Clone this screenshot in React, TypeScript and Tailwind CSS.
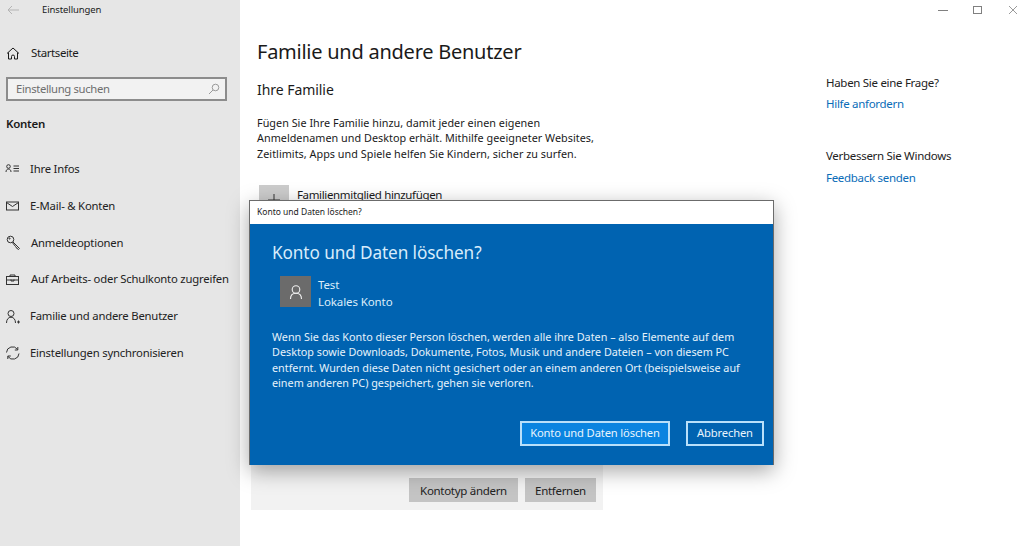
import type { ReactNode } from "react";

const font = "font-['Noto_Sans','Open_Sans',sans-serif]";

function Icon({ children, className = "" }: { children: ReactNode; className?: string }) {
  return (
    <svg width="16" height="16" viewBox="0 0 16 16" fill="none" stroke="currentColor" strokeWidth="1" className={className} aria-hidden="true">
      {children}
    </svg>
  );
}

const navItems: { label: string; left: string; icon: ReactNode }[] = [
  {
    label: "Ihre Infos",
    left: "ml-[5px]",
    icon: (
      <>
        <circle cx="3.5" cy="5.5" r="1.8" />
        <path d="M1 11c0-1.900 1-2.900 2.500-2.900S6 9.100 6 11M8.500 5h5.500M8.500 7.500h5.500M8.500 10h5.500" />
      </>
    ),
  },
  {
    label: "E-Mail- & Konten",
    left: "ml-[5px]",
    icon: (
      <>
        <rect x="1.500" y="4" width="12" height="8" />
        <path d="M1.500 4.500l6 4 6-4" />
      </>
    ),
  },
  {
    label: "Anmeldeoptionen",
    left: "ml-[6px]",
    icon: (
      <>
        <circle cx="4.500" cy="4.500" r="3.300" />
        <path d="M7 7l6.500 6.500-1 1-1-.5-.5-1-1-.5-.5-1L6.300 7.500" />
        <circle cx="3.500" cy="3.500" r="0.600" />
      </>
    ),
  },
  {
    label: "Auf Arbeits- oder Schulkonto zugreifen",
    left: "ml-[6px]",
    icon: (
      <>
        <rect x="0.500" y="4.500" width="12" height="8" />
        <path d="M4 4.500V3h5v1.500M0.500 8h12M5 7.500v1.500h3V7.500" />
      </>
    ),
  },
  {
    label: "Familie und andere Benutzer",
    left: "ml-[5px]",
    icon: (
      <>
        <circle cx="6" cy="4.500" r="3" />
        <path d="M1.500 14c0-3.500 1.800-5.800 4.500-5.800s4.500 2.300 4.500 5.800M12 13h3M13.500 11.500v3" />
      </>
    ),
  },
  {
    label: "Einstellungen synchronisieren",
    left: "ml-[5px]",
    icon: (
      <>
        <path d="M1.500 7.500A6 6 0 0 1 12.500 4.500M14 8.500A6 6 0 0 1 3 11.500" />
        <path d="M12.800 2v3h-3M2.800 14v-3h3" />
      </>
    ),
  },
];

function Sidebar() {
  return (
    <aside className="w-[240px] h-[546px] shrink-0 bg-[#e6e6e6] flex flex-col text-[#1a1a1a]">
      <div className="h-[19px] flex items-center pt-px">
        <svg width="12" height="10" viewBox="0 0 12 10" fill="none" stroke="#b4b4b4" strokeWidth="1" className="ml-[7px]" aria-hidden="true">
          <path d="M12 5H1M5 1L1 5l4 4" />
        </svg>
        <span className="ml-[23px] text-[9.500px] tracking-[-0.1px]">Einstellungen</span>
      </div>
      <div className="mt-[25px] h-[18px] flex items-center">
        <Icon className="ml-[5px]">
          <path d="M2 8.500L8 3l6 5.500M3.500 7.500V14h3v-2.500a1.500 1.500 0 0 1 3 0V14h3V7.500" />
        </Icon>
        <span className="ml-[10px] text-[11.500px] tracking-[-0.4px]">Startseite</span>
      </div>
      <div className="mt-[15px] mx-[6px] w-[221px] h-[24px] box-border border-2 border-[#8c8c8c] bg-[#f2f2f2] flex items-center justify-between pl-2 pr-[5px]">
        <span className="text-[11.300px] text-[#6e6e6e] tracking-[-0.35px]">Einstellung suchen</span>
        <svg width="12" height="12" viewBox="0 0 12 12" fill="none" stroke="#9a9a9a" strokeWidth="1" aria-hidden="true">
          <circle cx="7.500" cy="4.500" r="3.300" />
          <path d="M5 7L1 11" />
        </svg>
      </div>
      <div className="mt-[14px] ml-[6px] h-[18px] flex items-center text-[11.500px] font-semibold tracking-[-0.25px]">Konten</div>
      <nav className="mt-[18px] flex flex-col">
        {navItems.map((item) => (
          <div key={item.label} className="h-[36.800px] flex items-center text-[#222]">
            <span className={`${item.left} w-[16px] flex`}>
              <Icon className="text-[#333]">{item.icon}</Icon>
            </span>
            <span className="ml-[9px] text-[11.300px] tracking-[-0.2px] whitespace-nowrap">{item.label}</span>
          </div>
        ))}
      </nav>
    </aside>
  );
}

function WindowControls() {
  return (
    <div className="h-[19px] flex justify-end items-center gap-[25px] pr-[2px] pt-px text-[#808080]">
      <svg width="10" height="10" viewBox="0 0 10 10" stroke="currentColor" aria-hidden="true"><path d="M0 5.500h10" /></svg>
      <svg width="10" height="10" viewBox="0 0 10 10" fill="none" stroke="currentColor" aria-hidden="true"><rect x="0.500" y="1.500" width="8" height="7" /></svg>
      <svg width="10" height="10" viewBox="0 0 10 10" stroke="currentColor" strokeWidth="0.800" aria-hidden="true"><path d="M1 1l8 8M9 1l-8 8" /></svg>
    </div>
  );
}

function Dialog() {
  return (
    <div className="absolute left-[249px] top-[200px] w-[525px] shadow-[0_6px_20px_rgba(0,0,0,0.35)] border border-[#6b6b6b] border-b-0">
      <div className="h-[23px] bg-white flex items-center pl-[7px] text-[8.500px] text-[#222]">Konto und Daten löschen?</div>
      <div className="h-[241px] bg-[#0063b1] text-white flex flex-col pl-[22px] pr-[9px]">
        <h2 className="mt-[16px] text-[17.200px] leading-[26px] font-normal text-[#d8ecfb] tracking-[-0.1px]">Konto und Daten löschen?</h2>
        <div className="mt-[10px] ml-[8px] flex gap-[7px]">
          <div className="w-[31px] h-[31px] bg-[#6b6b6b] flex items-center justify-center">
            <svg width="16" height="16" viewBox="0 0 16 16" fill="none" stroke="#f0f0f0" strokeWidth="1.100" aria-hidden="true">
              <circle cx="8" cy="5.500" r="3.800" />
              <path d="M2.500 15c0-3.800 2.500-5.800 5.500-5.800s5.500 2 5.500 5.800" />
            </svg>
          </div>
          <div className="text-[11.500px] leading-[17px] text-[#dcedfa] tracking-[-0.1px]">
            <div>Test</div>
            <div>Lokales Konto</div>
          </div>
        </div>
        <p className="mt-[19px] text-[10.800px] leading-[15.400px] text-[#e6f2fb] whitespace-nowrap">
          Wenn Sie das Konto dieser Person löschen, werden alle ihre Daten – also Elemente auf dem
          <br />
          Desktop sowie Downloads, Dokumente, Fotos, Musik und andere Dateien – von diesem PC
          <br />
          entfernt. Wurden diese Daten nicht gesichert oder an einem anderen Ort (beispielsweise auf
          <br />
          einem anderen PC) gespeichert, gehen sie verloren.
        </p>
        <div className="mt-[30px] flex justify-end gap-[16px]">
          <button type="button" className="w-[150px] h-[25px] border-2 border-[#b9e0fa] bg-[#0a84e0] text-[11.200px] tracking-[-0.15px] text-[#e8f4fd]">
            Konto und Daten löschen
          </button>
          <button type="button" className="w-[78px] h-[25px] border-2 border-[#b9e0fa] bg-[#0063b1] text-[11.200px] tracking-[-0.15px] text-[#e8f4fd]">
            Abbrechen
          </button>
        </div>
      </div>
    </div>
  );
}

export default function App() {
  return (
    <div className={`${font} relative w-[1020px] h-[546px] overflow-hidden bg-white flex`}>
      <Sidebar />
      <main className="flex-1 flex flex-col min-w-0">
        <WindowControls />
        <div className="flex">
          <section className="w-[586px] pl-[17px] shrink-0 text-[#1a1a1a]">
            <h1 className="mt-[18px] h-[30px] text-[20px] leading-[30px] font-normal tracking-[-0.25px] whitespace-nowrap">Familie und andere Benutzer</h1>
            <h3 className="mt-[12px] h-[21px] text-[14px] leading-[21px] font-normal tracking-[-0.05px]">Ihre Familie</h3>
            <p className="mt-[15px] text-[10.800px] leading-[15.400px] tracking-[0.03px] whitespace-nowrap">
              Fügen Sie Ihre Familie hinzu, damit jeder einen eigenen
              <br />
              Anmeldenamen und Desktop erhält. Mithilfe geeigneter Websites,
              <br />
              Zeitlimits, Apps und Spiele helfen Sie Kindern, sicher zu surfen.
            </p>
            <div className="mt-[24px] flex items-start">
              <div className="ml-[2px] w-[30px] h-[30px] bg-[#cccccc] flex items-center justify-center">
                <svg width="12" height="12" viewBox="0 0 12 12" stroke="#333" strokeWidth="1" aria-hidden="true">
                  <path d="M6 0v12M0 6h12" />
                </svg>
              </div>
              <span className="ml-[8px] mt-[2px] text-[11.500px] leading-[16px] tracking-[-0.35px]">Familienmitglied hinzufügen</span>
            </div>
            <div className="mt-[217px] -ml-[6px] w-[352px] h-[78px] bg-[#f2f2f2] flex items-end justify-end gap-[7px] pr-[7px] pb-[8px]">
              <button type="button" className="w-[109px] h-[24px] bg-[#c4c4c4] text-[11.500px] tracking-[-0.3px] text-[#222]">Kontotyp ändern</button>
              <button type="button" className="w-[71px] h-[24px] bg-[#c4c4c4] text-[11.500px] tracking-[-0.3px] text-[#222]">Entfernen</button>
            </div>
          </section>
          <aside className="w-[190px] shrink-0 text-[11.500px] tracking-[-0.3px] text-[#222] whitespace-nowrap">
            <div className="mt-[55px] leading-[18px]">Haben Sie eine Frage?</div>
            <div className="mt-[3px] leading-[18px] text-[#0a6cb8]">Hilfe anfordern</div>
            <div className="mt-[34px] leading-[18px]">Verbessern Sie Windows</div>
            <div className="mt-[4px] leading-[18px] text-[#0a6cb8]">Feedback senden</div>
          </aside>
        </div>
      </main>
      <Dialog />
    </div>
  );
}
